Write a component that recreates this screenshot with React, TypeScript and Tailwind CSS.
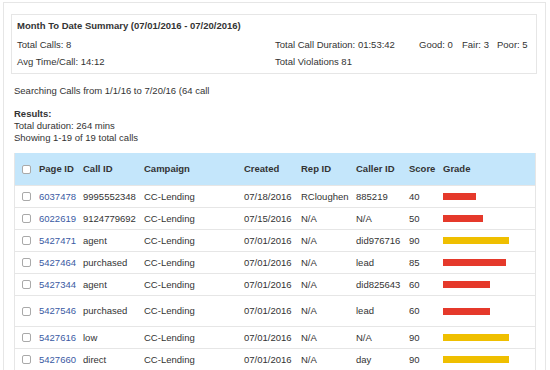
import React from "react";

interface CallRow {
  pageId: string;
  callId: string;
  campaign: string;
  created: string;
  repId: string;
  callerId: string;
  score: number;
  bar: number;
  color: "red" | "yellow";
  tall?: boolean;
}

const rows: CallRow[] = [
  { pageId: "6037478", callId: "9995552348", campaign: "CC-Lending", created: "07/18/2016", repId: "RCloughen", callerId: "885219", score: 40, bar: 33, color: "red" },
  { pageId: "6022619", callId: "9124779692", campaign: "CC-Lending", created: "07/15/2016", repId: "N/A", callerId: "N/A", score: 50, bar: 40, color: "red" },
  { pageId: "5427471", callId: "agent", campaign: "CC-Lending", created: "07/01/2016", repId: "N/A", callerId: "did976716", score: 90, bar: 66, color: "yellow" },
  { pageId: "5427464", callId: "purchased", campaign: "CC-Lending", created: "07/01/2016", repId: "N/A", callerId: "lead", score: 85, bar: 63, color: "red" },
  { pageId: "5427344", callId: "agent", campaign: "CC-Lending", created: "07/01/2016", repId: "N/A", callerId: "did825643", score: 60, bar: 47, color: "red" },
  { pageId: "5427546", callId: "purchased", campaign: "CC-Lending", created: "07/01/2016", repId: "N/A", callerId: "lead", score: 60, bar: 47, color: "red", tall: true },
  { pageId: "5427616", callId: "low", campaign: "CC-Lending", created: "07/01/2016", repId: "N/A", callerId: "N/A", score: 90, bar: 66, color: "yellow" },
  { pageId: "5427660", callId: "direct", campaign: "CC-Lending", created: "07/01/2016", repId: "N/A", callerId: "day", score: 90, bar: 66, color: "yellow" },
];

const cols = "grid grid-cols-[20px_44px_61px_100px_57px_55px_53px_34px_1fr] items-center";

function Checkbox() {
  return <span className="block w-[9px] h-[9px] border border-[#a9a9a9] rounded-[2px] bg-white" />;
}

export default function App() {
  return (
    <div
      className="h-[370px] w-[550px] overflow-hidden bg-white text-[#333] text-[9.5px]"
      style={{ fontFamily: '"Liberation Sans", Arial, sans-serif' }}
    >
      <div className="mt-[2px] ml-[3px] w-[543px] h-[400px] border border-[#e6e6e6] pt-[11px] pl-[7px] pr-[8px]">
        {/* summary */}
        <div className="border border-[#e6e6e6] pl-[5px] pt-[2px] pb-[3px] leading-[17px] whitespace-nowrap">
          <div className="font-bold mb-[2px]">Month To Date Summary (07/01/2016 - 07/20/2016)</div>
          <div className="flex">
            <span className="w-[258px] shrink-0">Total Calls: 8</span>
            <span className="w-[144px] shrink-0">Total Call Duration: 01:53:42</span>
            <span className="w-[43px] shrink-0">Good: 0</span>
            <span className="w-[35px] shrink-0">Fair: 3</span>
            <span className="shrink-0">Poor: 5</span>
          </div>
          <div className="flex">
            <span className="w-[258px] shrink-0">Avg Time/Call: 14:12</span>
            <span>Total Violations 81</span>
          </div>
        </div>

        <div className="pl-[3px] leading-[12px]">
          <div className="mt-[11px] whitespace-nowrap">Searching Calls from 1/1/16 to 7/20/16 (64 call</div>
          <div className="mt-[11px] font-bold">Results:</div>
          <div>Total duration: 264 mins</div>
          <div>Showing 1-19 of 19 total calls</div>

          {/* table */}
          <div className="mt-[9px] w-[522px] border-x border-[#e6e6e6]">
            <div className={`${cols} h-[32px] bg-[#c4e6fb] font-bold`}>
              <div className="pl-[7px]"><Checkbox /></div>
              <div className="pl-[4px]">Page ID</div>
              <div className="pl-[4px]">Call ID</div>
              <div className="pl-[4px]">Campaign</div>
              <div className="pl-[4px]">Created</div>
              <div className="pl-[4px]">Rep ID</div>
              <div className="pl-[4px]">Caller ID</div>
              <div className="pl-[4px]">Score</div>
              <div className="pl-[4px]">Grade</div>
            </div>
            {rows.map((r) => (
              <div
                key={r.pageId}
                className={`${cols} ${r.tall ? "h-[31px]" : "h-[22px]"} border-t border-[#e6e6e6] whitespace-nowrap`}
              >
                <div className="pl-[7px]"><Checkbox /></div>
                <div className="pl-[4px] text-[#3a5aa3]">{r.pageId}</div>
                <div className="pl-[4px]">{r.callId}</div>
                <div className="pl-[4px]">{r.campaign}</div>
                <div className="pl-[4px]">{r.created}</div>
                <div className="pl-[4px]">{r.repId}</div>
                <div className="pl-[4px]">{r.callerId}</div>
                <div className="pl-[4px]">{r.score}</div>
                <div className="pl-[4px]">
                  <div
                    className={`h-[7px] ${r.color === "red" ? "bg-[#e5392b]" : "bg-[#efbf00]"}`}
                    style={{ width: r.bar }}
                  />
                </div>
              </div>
            ))}
          </div>
        </div>
      </div>
    </div>
  );
}
